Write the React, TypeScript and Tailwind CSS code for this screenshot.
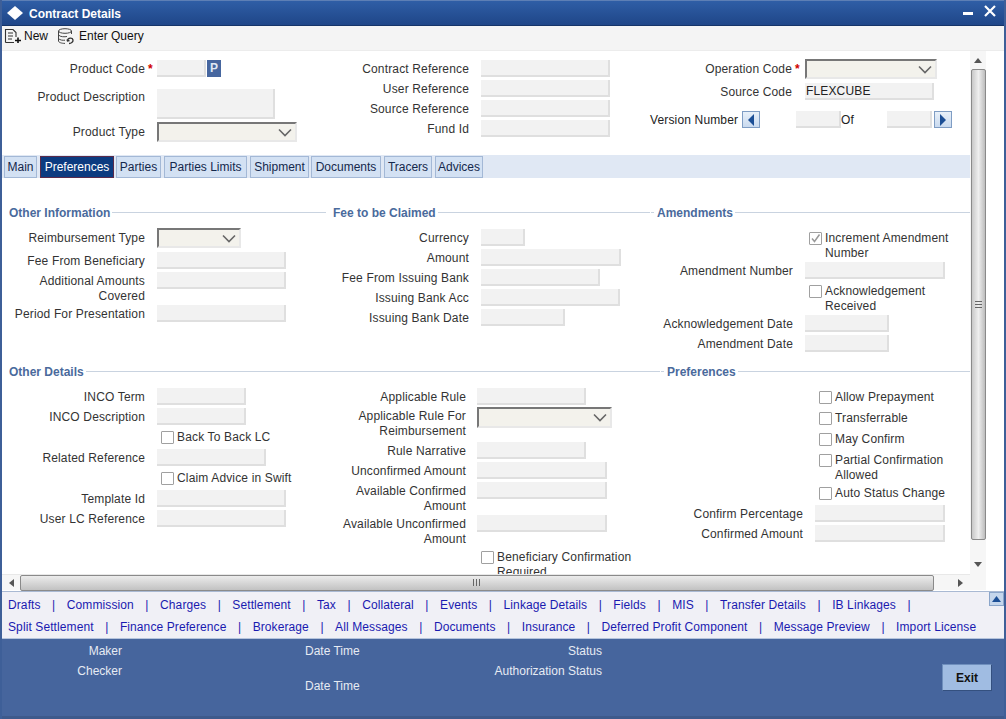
import type { ReactNode } from 'react'

function TextBox({ className = '', children }: { className?: string; children?: ReactNode }) {
  return (
    <div className={`h-[17px] shrink-0 bg-[#f2f2f2] border-b-2 border-r-2 border-[#dfdfdf] text-[12px] leading-[15px] text-[#222] pl-[1px] pt-[1px] ${className}`}>
      {children}
    </div>
  )
}

function SelectBox({ className = '' }: { className?: string }) {
  return (
    <div className={`h-[20px] shrink-0 flex items-center justify-end pr-[3px] bg-[#f3f2ec] border-t-2 border-l-2 border-t-[#777] border-l-[#777] border-b-2 border-r-2 border-b-[#e8e8e8] border-r-[#e8e8e8] ${className}`}>
      <svg width="14" height="9" viewBox="0 0 14 9" fill="none">
        <path d="M1 1.5 7 7.5 13 1.5" stroke="#666" strokeWidth="1.6" />
      </svg>
    </div>
  )
}

function Field({
  label,
  lw,
  box,
  className = '',
  gap = 'gap-[12px]',
  children,
}: {
  label: ReactNode
  lw: string
  box: string
  className?: string
  gap?: string
  children?: ReactNode
}) {
  return (
    <div className={`flex ${gap} ${className}`}>
      <div className={`shrink-0 text-right text-[#333] leading-[15px] pt-[2px] ${lw}`}>{label}</div>
      <TextBox className={box}>{children}</TextBox>
    </div>
  )
}

function Check({ className = '', label, checked }: { className?: string; label: ReactNode; checked?: boolean }) {
  return (
    <div className={`flex items-start gap-[3px] text-[#333] leading-[15px] ${className}`}>
      <div className="w-[13px] h-[13px] mt-[1px] shrink-0 bg-white border border-[#a0a0a0] rounded-[1px] flex items-center justify-center">
        {checked && (
          <svg width="11" height="11" viewBox="0 0 11 11" fill="none">
            <path d="M2 5.5 4.5 8.5 9.5 1.5" stroke="#999" strokeWidth="1.5" />
          </svg>
        )}
      </div>
      <div>{label}</div>
    </div>
  )
}

function Legend({ title, className = '' }: { title: string; className?: string }) {
  return (
    <div className={`flex items-center gap-[2px] h-[15px] ${className}`}>
      <div className="shrink-0 font-bold text-[#4a6a9c] whitespace-nowrap tracking-normal">{title}</div>
      <div className="h-px flex-1 bg-[#c9d3e0]" />
    </div>
  )
}

function Tab({ label, active, className = '' }: { label: string; active?: boolean; className?: string }) {
  return (
    <div
      className={`h-[22px] flex items-center justify-center border text-[12px] tracking-normal ${
        active ? 'bg-[#0c3b80] border-[#5a2a4a] text-white' : 'bg-[#d3e1f3] border-[#a3b8d6] text-[#14284c]'
      } ${className}`}
    >
      {label}
    </div>
  )
}

function LinkRow({ items, className = '' }: { items: string[]; className?: string }) {
  return (
    <div className={`flex items-center h-[22px] whitespace-nowrap tracking-[0.1px] ${className}`}>
      {items.map((item, i) => (
        <div key={item} className="flex items-center">
          <span className="text-[#1a1ab0]">{item}</span>
          {(i < items.length - 1 || item === 'IB Linkages') && <span className="mx-[11.5px] text-[#1a1ab0]">|</span>}
        </div>
      ))}
    </div>
  )
}

const thumbV = 'bg-gradient-to-r from-[#c8c8c8] via-[#efefef] to-[#bdbdbd] border border-[#8a8a8a] rounded-[2px]'
const thumbH = 'bg-gradient-to-b from-[#ececec] to-[#c2c2c2] border border-[#8a8a8a] rounded-[2px]'

export default function App() {
  return (
    <div className="w-[1006px] h-[719px] overflow-hidden flex flex-col bg-white border-l-2 border-r-[2px] border-[#3e5f98] text-[12px] tracking-[0.15px] font-['Liberation_Sans',Arial,sans-serif]">
      {/* Title bar */}
      <div className="h-[26px] shrink-0 flex items-center justify-between pl-[5px] pr-[8px] bg-gradient-to-b from-[#2f5ea6] to-[#1f4688] border-b border-[#153468] border-t border-t-[#5d7fb5]">
        <div className="flex items-center gap-[6px]">
          <svg width="16" height="14" viewBox="0 0 16 14">
            <path d="M8 0 16 7 8 14 0 7Z" fill="#fff" />
          </svg>
          <span className="font-bold text-white text-[12px] tracking-normal pt-[1px]">Contract Details</span>
        </div>
        <div className="flex items-center gap-[11px] mt-[-5px]">
          <div className="w-[10px] h-[3px] bg-white mt-[5px]" />
          <svg width="12" height="12" viewBox="0 0 12 12">
            <path d="M1 1 11 11M11 1 1 11" stroke="#fff" strokeWidth="2.2" />
          </svg>
        </div>
      </div>

      {/* Toolbar */}
      <div className="h-[25px] shrink-0 flex items-center pl-[2px] pb-[4px] bg-[#f4f4f4] border-b border-[#ececec] text-[#111] tracking-normal">
        <svg width="18" height="16" viewBox="0 0 18 16" fill="none" className="mr-[2px]">
          <path d="M1.5 14.5V1.5H9L12 4.5V9" stroke="#333" strokeWidth="1.1" />
          <path d="M1.5 14.5H10M4 5H9M4 8H9M4 11H8" stroke="#333" strokeWidth="1.1" />
          <path d="M14 9.5V15M11 12.5H17" stroke="#111" strokeWidth="1.6" />
        </svg>
        <span>New</span>
        <svg width="18" height="17" viewBox="0 0 18 17" fill="none" className="ml-[9px] mr-[4px]">
          <ellipse cx="8" cy="3" rx="6.5" ry="2.3" stroke="#444" strokeWidth="1" />
          <path d="M1.5 3V13C1.5 14.4 4.5 15.4 8 15.4M14.5 3V6M1.5 7C3 9 8 9 10 8.5M1.5 10.5C3 12.3 6 12.4 8 12.2" stroke="#444" strokeWidth="1" />
          <path d="M10.5 12.5C11 9.5 15.5 9.5 16 12C16.3 14 14 15.5 12 15.5M10 11.5 10.5 13 12.5 12.5" stroke="#333" strokeWidth="1.3" />
        </svg>
        <span>Enter Query</span>
      </div>

      {/* Body with scrollbars */}
      <div className="h-[540px] shrink-0 flex">
        <div className="w-[968px] shrink-0 flex flex-col">
          {/* Contract header */}
          <div className="h-[104px] shrink-0 flex">
            <div className="w-[328px] shrink-0 flex flex-col">
              <div className="flex mt-[9px] gap-[12px]">
                <div className="relative w-[143px] text-right text-[#333] leading-[15px] pt-[2px]">
                  Product Code
                  <span className="absolute left-full ml-[3px] text-[#d00000] font-bold">*</span>
                </div>
                <TextBox className="w-[49px]" />
                <div className="w-[14px] h-[17px] ml-[-11px] bg-[#46669f] text-[#dfe7f3] font-bold text-center leading-[17px]">P</div>
              </div>
              <div className="flex mt-[12px] gap-[12px]">
                <div className="w-[143px] text-right text-[#333] leading-[15px] pt-[1px]">Product Description</div>
                <TextBox className="w-[118px] h-[30px]" />
              </div>
              <div className="flex mt-[3px] gap-[12px]">
                <div className="w-[143px] text-right text-[#333] leading-[15px] pt-[3px]">Product Type</div>
                <SelectBox className="w-[140px]" />
              </div>
            </div>
            <div className="w-[320px] shrink-0 flex flex-col">
              <Field label="Contract Reference" lw="w-[139px]" box="w-[129px]" className="mt-[9px]" />
              <Field label="User Reference" lw="w-[139px]" box="w-[129px]" className="mt-[3px]" />
              <Field label="Source Reference" lw="w-[139px]" box="w-[129px]" className="mt-[3px]" />
              <Field label="Fund Id" lw="w-[139px]" box="w-[129px]" className="mt-[3px]" />
            </div>
            <div className="flex-1 flex flex-col">
              <div className="flex mt-[8px] gap-[13px]">
                <div className="relative w-[142px] text-right text-[#333] leading-[15px] pt-[3px]">
                  Operation Code
                  <span className="absolute left-full ml-[3px] text-[#d00000] font-bold">*</span>
                </div>
                <SelectBox className="w-[132px]" />
              </div>
              <Field label="Source Code" lw="w-[142px]" box="w-[129px]" gap="gap-[13px]" className="mt-[4px]">
                FLEXCUBE
              </Field>
              <div className="flex items-center mt-[11px] h-[17px] text-[#222]">
                <span className="w-[90px] whitespace-nowrap">Version Number</span>
                <button className="w-[18px] h-[17px] ml-[2px] flex items-center justify-center bg-gradient-to-b from-[#e8f0f9] to-[#c9daef] border border-[#7f9dc4]">
                  <svg width="8" height="12" viewBox="0 0 8 12"><path d="M7 0V12L1 6Z" fill="#1c4f96" /></svg>
                </button>
                <TextBox className="w-[45px] ml-[36px]" />
                <span className="w-[46px] text-[#222]">Of</span>
                <TextBox className="w-[45px]" />
                <button className="w-[18px] h-[17px] ml-[2px] flex items-center justify-center bg-gradient-to-b from-[#e8f0f9] to-[#c9daef] border border-[#7f9dc4]">
                  <svg width="8" height="12" viewBox="0 0 8 12"><path d="M1 0V12L7 6Z" fill="#1c4f96" /></svg>
                </button>
              </div>
            </div>
          </div>

          {/* Tabs */}
          <div className="h-[23px] shrink-0 flex items-center bg-[#e0e8f4] pl-[2px]">
            <Tab label="Main" className="w-[33px]" />
            <Tab label="Preferences" active className="w-[74px] ml-[3px]" />
            <Tab label="Parties" className="w-[45px] ml-[2px]" />
            <Tab label="Parties Limits" className="w-[83px] ml-[3px]" />
            <Tab label="Shipment" className="w-[59px] ml-[3px]" />
            <Tab label="Documents" className="w-[70px] ml-[2px]" />
            <Tab label="Tracers" className="w-[48px] ml-[3px]" />
            <Tab label="Advices" className="w-[48px] ml-[3px]" />
          </div>

          {/* Form sections */}
          <div className="h-[396px] shrink-0 overflow-hidden pt-[27px]">
            <div className="h-[159px]">
              <div className="flex">
                <Legend title="Other Information" className="w-[324px] pl-[7px]" />
                <Legend title="Fee to be Claimed" className="w-[320px] ml-[4px] pl-[3px]" />
                <div className="flex-1 pl-[1px] flex items-center gap-[3px]">
                  <div className="w-[3px] h-px bg-[#c9d3e0]" />
                  <Legend title="Amendments" className="flex-1" />
                </div>
              </div>
              <div className="flex">
                <div className="w-[328px] shrink-0 flex flex-col">
                  <div className="flex mt-[8px] gap-[12px]">
                    <div className="w-[143px] text-right text-[#333] leading-[15px] pt-[3px]">Reimbursement Type</div>
                    <SelectBox className="w-[84px]" />
                  </div>
                  <Field label="Fee From Beneficiary" lw="w-[143px]" box="w-[129px]" className="mt-[4px]" />
                  <Field label={<>Additional Amounts<br />Covered</>} lw="w-[143px]" box="w-[129px]" className="mt-[3px] h-[33px]" />
                  <Field label="Period For Presentation" lw="w-[143px]" box="w-[129px]" />
                </div>
                <div className="w-[320px] shrink-0 flex flex-col">
                  <Field label="Currency" lw="w-[139px]" box="w-[44px]" className="mt-[9px]" />
                  <Field label="Amount" lw="w-[139px]" box="w-[140px]" className="mt-[3px]" />
                  <Field label="Fee From Issuing Bank" lw="w-[139px]" box="w-[119px]" className="mt-[3px]" />
                  <Field label="Issuing Bank Acc" lw="w-[139px]" box="w-[139px]" className="mt-[3px]" />
                  <Field label="Issuing Bank Date" lw="w-[139px]" box="w-[84px]" className="mt-[3px]" />
                </div>
                <div className="flex-1 flex flex-col">
                  <Check checked className="ml-[159px] mt-[11px] h-[31px]" label={<>Increment Amendment<br />Number</>} />
                  <Field label="Amendment Number" lw="w-[143px]" box="w-[140px]" />
                  <Check className="ml-[159px] mt-[5px] h-[31px]" label={<>Acknowledgement<br />Received</>} />
                  <Field label="Acknowledgement Date" lw="w-[143px]" box="w-[84px]" />
                  <Field label="Amendment Date" lw="w-[143px]" box="w-[84px]" className="mt-[3px]" />
                </div>
              </div>
            </div>

            <div className="flex">
              <Legend title="Other Details" className="w-[658px] pl-[7px]" />
              <div className="flex-1 flex items-center gap-[3px] pl-[1px]">
                <div className="w-[3px] h-px bg-[#c9d3e0]" />
                <Legend title="Preferences" className="flex-1" />
              </div>
            </div>
            <div className="flex">
              <div className="w-[328px] shrink-0 flex flex-col">
                <Field label="INCO Term" lw="w-[143px]" box="w-[89px]" className="mt-[9px]" />
                <Field label="INCO Description" lw="w-[143px]" box="w-[89px]" className="mt-[3px]" />
                <Check className="ml-[159px] mt-[5px] h-[15px]" label="Back To Back LC" />
                <Field label="Related Reference" lw="w-[143px]" box="w-[109px]" className="mt-[4px]" />
                <Check className="ml-[159px] mt-[5px] h-[15px]" label="Claim Advice in Swift" />
                <Field label="Template Id" lw="w-[143px]" box="w-[129px]" className="mt-[4px]" />
                <Field label="User LC Reference" lw="w-[143px]" box="w-[129px]" className="mt-[3px]" />
              </div>
              <div className="w-[320px] shrink-0 flex flex-col">
                <Field label="Applicable Rule" lw="w-[136px]" box="w-[109px]" gap="gap-[11px]" className="mt-[9px]" />
                <div className="flex gap-[11px] mt-[2px] h-[35px]">
                  <div className="w-[136px] text-right text-[#333] leading-[15px] pt-[2px] whitespace-nowrap">
                    Applicable Rule For
                    <br />
                    Reimbursement
                  </div>
                  <SelectBox className="w-[135px] h-[21px]" />
                </div>
                <Field label="Rule Narrative" lw="w-[136px]" box="w-[109px]" gap="gap-[11px]" />
                <Field label="Unconfirmed Amount" lw="w-[136px]" box="w-[130px]" gap="gap-[11px]" className="mt-[3px]" />
                <Field label={<>Available Confirmed<br />Amount</>} lw="w-[136px]" box="w-[130px]" gap="gap-[11px]" className="mt-[3px] h-[33px]" />
                <Field label={<><span className="whitespace-nowrap">Available Unconfirmed</span><br />Amount</>} lw="w-[136px]" box="w-[130px]" gap="gap-[11px]" className="h-[35px]" />
                <Check className="ml-[151px]" label={<>Beneficiary Confirmation<br />Required</>} />
              </div>
              <div className="flex-1 flex flex-col">
                <Check className="ml-[169px] mt-[11px] h-[15px]" label="Allow Prepayment" />
                <Check className="ml-[169px] mt-[6px] h-[15px]" label="Transferrable" />
                <Check className="ml-[169px] mt-[6px] h-[15px]" label="May Confirm" />
                <Check className="ml-[169px] mt-[6px] h-[30px]" label={<>Partial Confirmation<br />Allowed</>} />
                <Check className="ml-[169px] mt-[3px] h-[15px]" label="Auto Status Change" />
                <Field label="Confirm Percentage" lw="w-[153px]" box="w-[130px]" className="mt-[4px]" />
                <Field label="Confirmed Amount" lw="w-[153px]" box="w-[130px]" className="mt-[3px]" />
              </div>
            </div>
          </div>

          {/* Horizontal scrollbar */}
          <div className="h-[16px] shrink-0 flex items-center bg-[#f6f6f6] border-t border-[#e8e8e8]">
            <div className="w-[18px] flex justify-center">
              <svg width="5" height="8" viewBox="0 0 5 8"><path d="M5 0V8L0 4Z" fill="#555" /></svg>
            </div>
            <div className={`w-[914px] h-[16px] flex items-center justify-center pr-[2px] ${thumbH}`}>
              <div className="w-[7px] h-[7px] border-x border-[#666] flex justify-center">
                <div className="w-px h-full bg-[#666]" />
              </div>
            </div>
            <div className="flex-1 flex justify-center pl-[16px]">
              <svg width="5" height="8" viewBox="0 0 5 8"><path d="M0 0V8L5 4Z" fill="#555" /></svg>
            </div>
          </div>
        </div>

        {/* Vertical scrollbar */}
        <div className="w-[16px] shrink-0 h-[539px] flex flex-col items-center bg-[#f6f6f6]">
          <div className="h-[18px] flex items-center justify-center">
            <svg width="8" height="5" viewBox="0 0 8 5"><path d="M0 5H8L4 0Z" fill="#555" /></svg>
          </div>
          <div className={`w-[15px] h-[471px] shrink-0 flex items-center justify-center ${thumbV}`}>
            <div className="w-[7px] h-[7px] border-y border-[#666] flex items-center">
              <div className="h-px w-full bg-[#666]" />
            </div>
          </div>
          <div className="h-[48px] shrink-0 flex items-center justify-center">
            <svg width="8" height="5" viewBox="0 0 8 5"><path d="M0 0H8L4 5Z" fill="#555" /></svg>
          </div>
        </div>
        <div className="flex-1 bg-white" />
      </div>

      {/* Sub-screen links */}
      <div className="relative h-[48px] shrink-0 flex flex-col pl-[6px] pt-[2px] bg-[#f0f0f6] border-t border-[#a9b9d3] border-b border-b-[#b5c4dc]">
        <LinkRow items={['Drafts', 'Commission', 'Charges', 'Settlement', 'Tax', 'Collateral', 'Events', 'Linkage Details', 'Fields', 'MIS', 'Transfer Details', 'IB Linkages']} />
        <LinkRow className="mt-[1px]" items={['Split Settlement', 'Finance Preference', 'Brokerage', 'All Messages', 'Documents', 'Insurance', 'Deferred Profit Component', 'Message Preview', 'Import License']} />
        <div className="absolute top-0 right-0 w-[15px] h-[14px] flex items-center justify-center bg-[#c5d6ec] border border-[#8aa5ca]">
          <svg width="9" height="6" viewBox="0 0 9 6"><path d="M0 6H9L4.5 0Z" fill="#1c4f96" /></svg>
        </div>
      </div>

      {/* Audit footer */}
      <div className="flex-1 flex bg-[#46659d] border-b-[3px] border-[#3e5a8c] text-[#e6ebf3] tracking-normal">
        <div className="w-[120px] shrink-0 flex flex-col items-end pt-[5px] leading-[15px]">
          <div>Maker</div>
          <div className="mt-[5px]">Checker</div>
        </div>
        <div className="ml-[183px] w-[170px] shrink-0 flex flex-col pt-[5px] leading-[15px]">
          <div>Date Time</div>
          <div className="mt-[20px]">Date Time</div>
        </div>
        <div className="w-[127px] shrink-0 flex flex-col items-end pt-[5px] leading-[15px]">
          <div>Status</div>
          <div className="mt-[5px]">Authorization Status</div>
        </div>
        <button className="ml-[340px] mt-[25px] w-[50px] h-[27px] bg-[#a0bce2] border border-[#34507f] border-t-[#6f8fbd] border-l-[#6f8fbd] text-[#111] font-bold">
          Exit
        </button>
      </div>
    </div>
  )
}
